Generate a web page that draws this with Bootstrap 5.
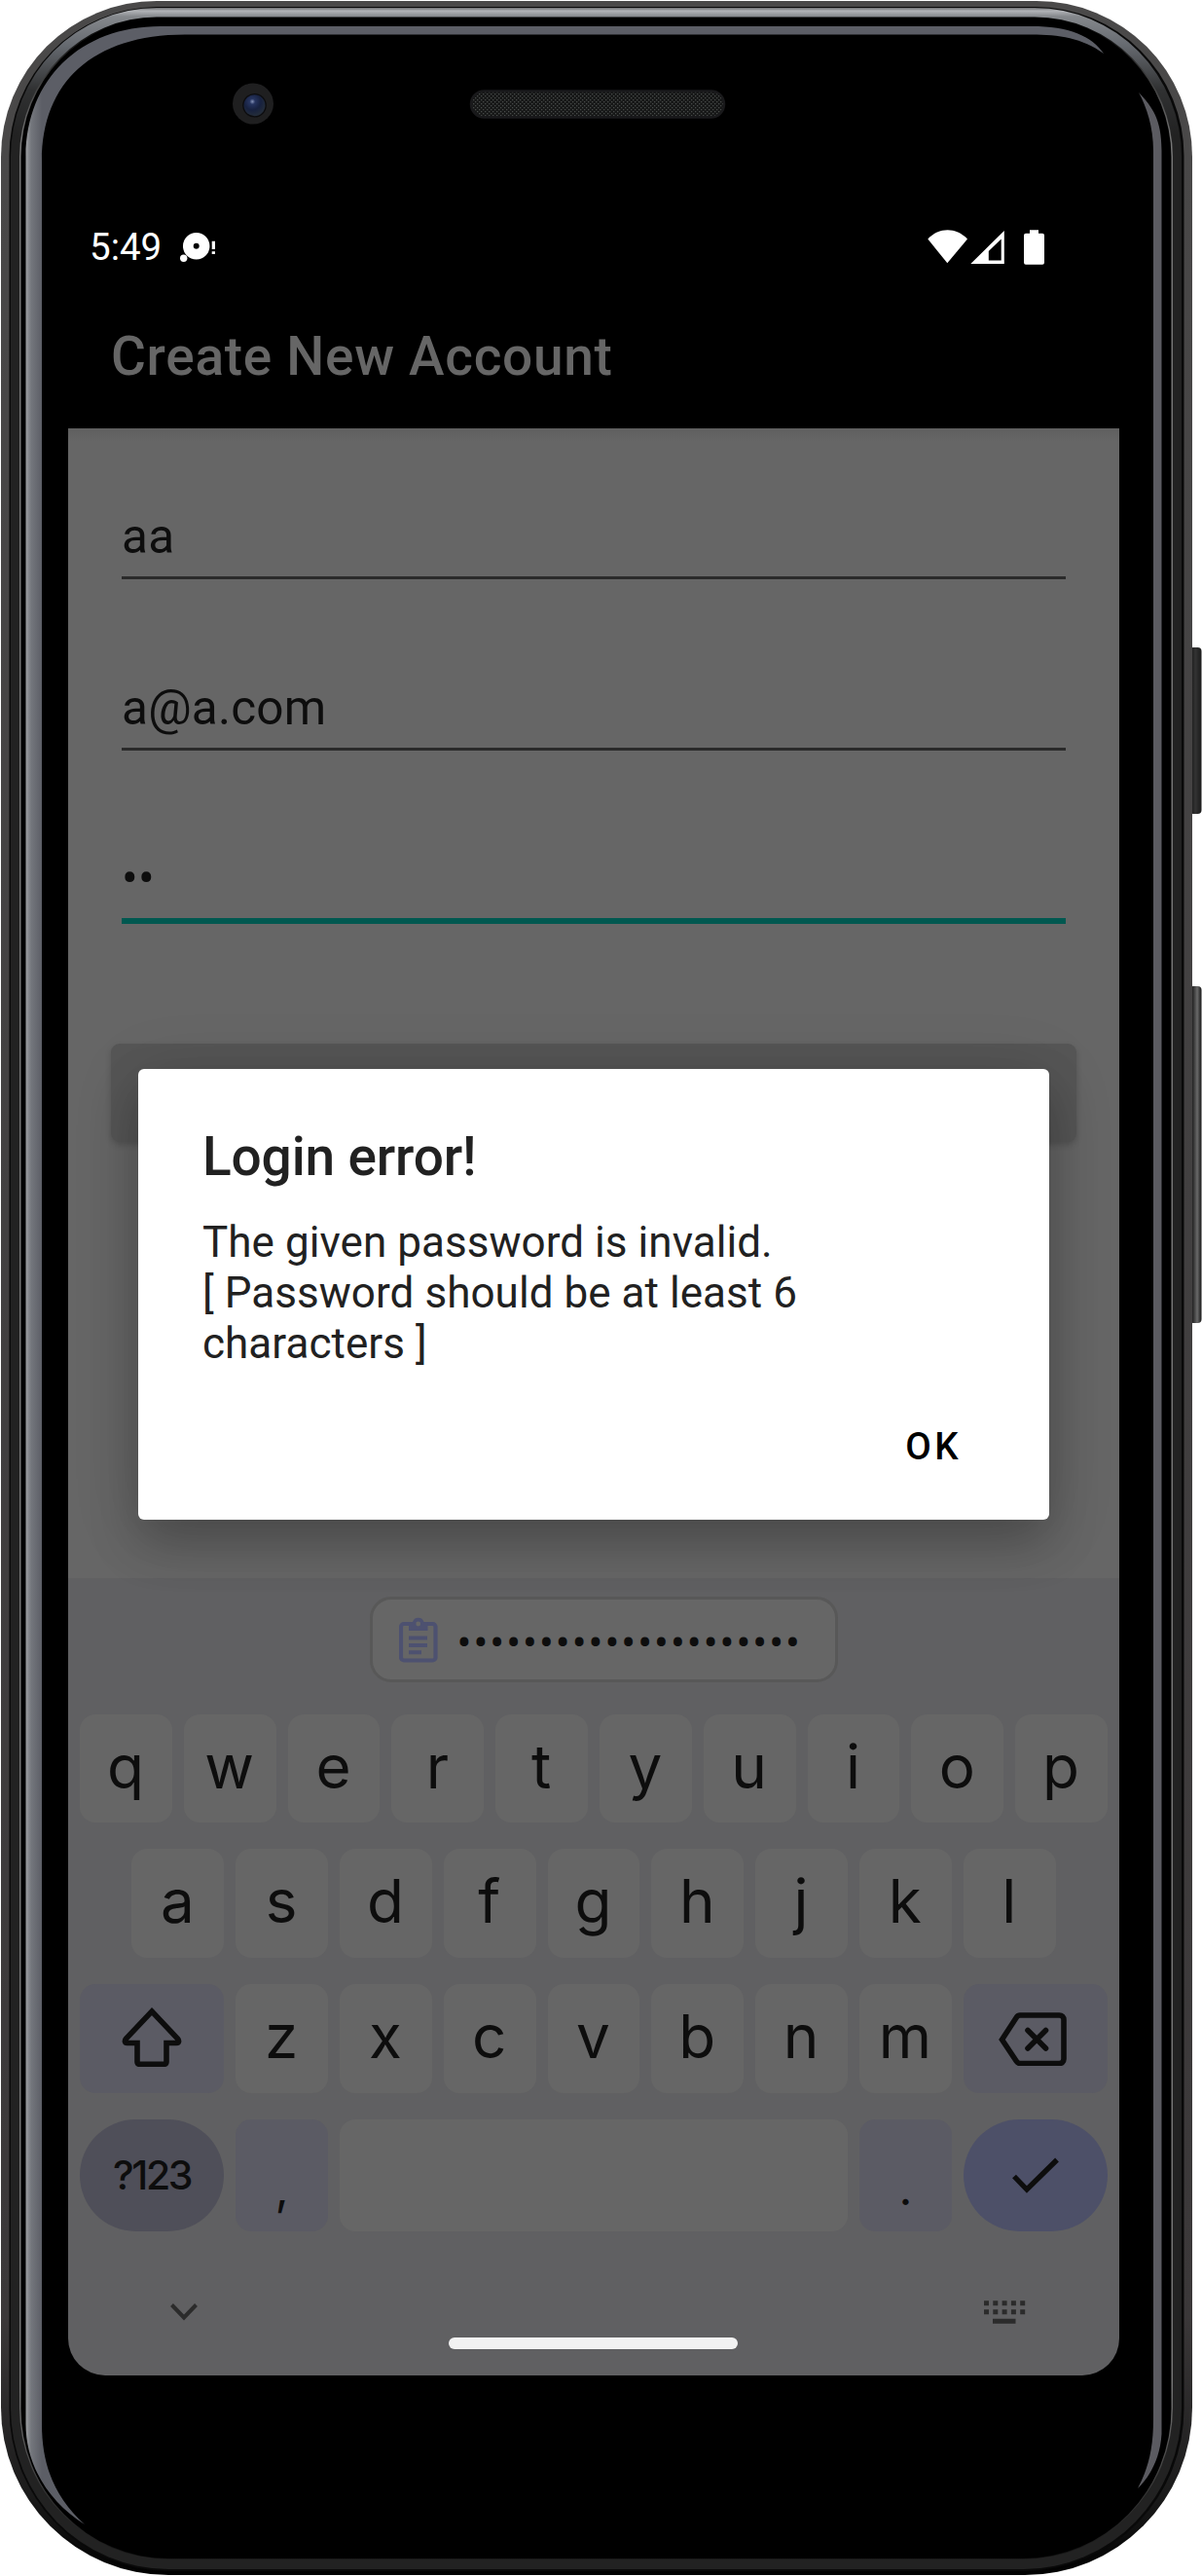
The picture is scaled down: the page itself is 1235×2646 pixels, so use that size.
<!DOCTYPE html>
<html lang="en">
<head>
<meta charset="utf-8">
<meta name="viewport" content="width=device-width, initial-scale=1">
<title>Create New Account</title>
<link href="https://cdn.jsdelivr.net/npm/bootstrap@5.3.0/dist/css/bootstrap.min.css" rel="stylesheet">
<style>
  body { font-family: Roboto, "Liberation Sans", sans-serif; background: #fff; }
  .device { width: 1235px; height: 2646px; padding: 220px 85px 0 70px; }
  .device-frame { width: 1235px; height: 2646px; }
  .screen { width: 1080px; height: 2220px; border-radius: 0 0 38px 38px; background: #000; }
  .status-bar { height: 66px; padding: 3px 76px 0 22px; font-size: 38.5px; line-height: 1; color: #fff; }
  .notif-icon { margin-left: 18px; }
  .app-bar { height: 154px; padding: 6px 44px 0; font-size: 55px; font-weight: 500; line-height: 1; letter-spacing: .7px; color: #666; }
  .form-area { height: 1181px; padding: 72px 55px 0; background: linear-gradient(#5f5f5f, #666 14px); }
  .field { height: 83px; padding: 1px 0 2px; margin-bottom: 93px; font-size: 49.5px; line-height: 1.2; letter-spacing: .2px; color: #0d0d0d;
    background: transparent; border: 0; border-bottom: 3px solid #2a2a2a; border-radius: 0; }
  .field-active { height: 85px; padding-bottom: 2px; border-bottom: 6px solid #005850; margin-bottom: 123px; }
  .submit-btn { height: 101px; margin: 0 -11px; border-radius: 9px; background: #565656; box-shadow: 0 3px 6px rgba(0,0,0,.18); }
  .keyboard { height: 819px; padding: 19px 12px 0; background: #606062; color: #0d0d0d; font-family: Inter, "Open Sans", sans-serif; }
  .clip-chip { width: 481px; height: 88px; margin: 0 0 33px 298px; padding: 0 26px 0 27px; border: 3px solid #585858; border-radius: 22px; background: #666; }
  .clip-dots { font-family: Roboto, sans-serif; font-size: 44px; line-height: 1; letter-spacing: 2.03px; padding: 7px 8px 0 0; }
  .key-row { gap: 12px; margin-bottom: 27px; height: 112px; }
  .key-row-first { height: 111px; }
  .key-row-last { height: 115px; }
  .keycap { flex: 0 0 94.8px; width: 94.8px; border-radius: 16px; background: #666; font-size: 62px; line-height: 1; padding: 0 1px 4px 0; }
  .keycap-wide { flex-basis: 148.2px; }
  .keycap-soft { background: #5b5b64; }
  .keycap-mode { background: #4f4f59; border-radius: 58px; font-size: 41px; font-weight: 500; letter-spacing: -2.4px; padding: 0; }
  .keycap-enter { background: #4d5068; border-radius: 58px; padding: 0; }
  .keycap-punct { padding: 26px 0 0; font-size: 48px; }
  .nav-row { padding: 71px 84px 0 93px; }
  .home-pill { width: 297px; height: 12px; border-radius: 6px; background: #f2f2f2; margin: 14px 0 0 379px; }
  .scrim { padding: 878px 72px 0; }
  .dialog { height: 463px; padding: 60px 66px 0; border-radius: 6px; background: #fff; color: #212121;
    box-shadow: 0 24px 50px rgba(0,0,0,.22), 0 8px 70px rgba(0,0,0,.13); }
  .dialog h1 { font-size: 55px; line-height: 60px; font-weight: 500; letter-spacing: -.15px; margin: 0 0 32px; }
  .dialog p { font-size: 44px; line-height: 52px; letter-spacing: .05px; margin: 0 0 30px; }
  .ok-btn { height: 100px; margin-right: 24px; padding: 0; border: 0; font-size: 38.5px; line-height: 1; font-weight: 500; letter-spacing: 3.4px; color: #000; background: none; }
</style>
</head>
<body>
<div class="device position-relative overflow-hidden">

  <!-- Phone body -->
  <svg class="device-frame position-absolute top-0 start-0" viewBox="0 0 1235 2646" aria-hidden="true">
    <defs>
      <linearGradient id="rim" gradientUnits="userSpaceOnUse" x1="0" y1="8" x2="0" y2="2640">
        <stop offset="0" stop-color="#6c6d70"/><stop offset=".0012" stop-color="#b2b4b8"/><stop offset=".0034" stop-color="#85888c"/>
        <stop offset=".014" stop-color="#686c72"/><stop offset=".032" stop-color="#303132"/><stop offset=".05" stop-color="#222"/>
        <stop offset="1" stop-color="#222"/>
      </linearGradient>
      <linearGradient id="line" x1="0" y1="0" x2="0" y2="1">
        <stop offset="0" stop-color="#000"/><stop offset=".02" stop-color="#333"/><stop offset=".05" stop-color="#777"/>
        <stop offset=".93" stop-color="#777"/><stop offset="1" stop-color="#111"/>
      </linearGradient>
      <linearGradient id="body" x1="0" y1="0" x2="0" y2="1">
        <stop offset="0" stop-color="#4a4949"/><stop offset=".9" stop-color="#3b3839"/><stop offset=".97" stop-color="#1a1a1a"/><stop offset="1" stop-color="#000"/>
      </linearGradient>
      <linearGradient id="glow" gradientUnits="userSpaceOnUse" x1="26" y1="0" x2="43" y2="0">
        <stop offset="0" stop-color="#a0a2a5"/><stop offset=".35" stop-color="#74777d"/><stop offset="1" stop-color="#5c5e66"/>
      </linearGradient>
      <linearGradient id="side" x1="0" y1="0" x2="1" y2="0">
        <stop offset="0" stop-color="#111"/><stop offset=".3" stop-color="#2a2a2a"/><stop offset=".65" stop-color="#6a6a6a"/><stop offset="1" stop-color="#151515"/>
      </linearGradient>
      <linearGradient id="power" x1="0" y1="0" x2="1" y2="0">
        <stop offset="0" stop-color="#111"/><stop offset=".5" stop-color="#333"/><stop offset="1" stop-color="#1a1a1a"/>
      </linearGradient>
      <radialGradient id="lens" cx=".4" cy=".32" r=".65">
        <stop offset="0" stop-color="#8592b8"/><stop offset=".2" stop-color="#26345f"/><stop offset=".6" stop-color="#17213f"/><stop offset="1" stop-color="#232c3a"/>
      </radialGradient>
      <pattern id="mesh" width="4" height="4" patternUnits="userSpaceOnUse">
        <rect width="4" height="4" fill="#161717"/><rect width="1.3" height="1.3" fill="#474a49"/><rect x="2" y="2" width="1.3" height="1.3" fill="#474a49"/>
      </pattern>
    </defs>
    <rect x="1222" y="665" width="12.5" height="171" rx="4" fill="url(#power)"/>
    <rect x="1222" y="1013" width="12.5" height="346" rx="4" fill="url(#side)"/>
    <path fill="url(#body)" d="M161 1H1065A160 160 0 0 1 1225 161V2473A172 172 0 0 1 1053 2645H173A172 172 0 0 1 1 2473V161A160 160 0 0 1 161 1Z"/>
    <path fill="#090909" d="M161 7H1063A153 153 0 0 1 1216.500 161V2473A165 167 0 0 1 1053 2641H173A164 167 0 0 1 9.500 2473V161A153 153 0 0 1 161 7Z"/>
    <path fill="url(#rim)" d="M161 8H1063A151 153 0 0 1 1214 161V2473A162 166 0 0 1 1052 2639H173A162 166 0 0 1 11 2473V161A150 153 0 0 1 161 8Z"/>
    <path fill="url(#line)" d="M161 17.500H1063A142 144 0 0 1 1205 161V2473A153 155 0 0 1 1052 2628.500H173A153 155 0 0 1 20 2473V161A141 144 0 0 1 161 17.500Z"/>
    <path d="M161 18.500H1063A140.500 143 0 0 1 1203.500 161V2473A152 154 0 0 1 1051 2628H173A152 154 0 0 1 21.500 2473V161A140 143 0 0 1 161 18.500Z"/>
    <path fill="url(#glow)" d="M87 2593C50 2570 26.500 2532 26.500 2490V160C27 82 82 27 165 27H1060C1098 27 1122 37 1134 55C1112 39 1088 35.500 1060 35.500H190C95 35.500 43 85 43 165V2490C43 2535 58 2567 87 2593Z"/>
    <path fill="#5b5b61" d="M1170 95C1184 110 1193.500 122 1193.500 155V2500C1192 2525 1182 2543 1169 2556C1180 2535 1185 2515 1185 2485V155C1185 130 1178 110 1170 95Z"/>
    <circle cx="260" cy="106.500" r="21" fill="#1f1f20"/>
    <circle cx="261.500" cy="108.300" r="12.300" fill="#0c0c0e"/>
    <circle cx="261.500" cy="108.300" r="11" fill="url(#lens)"/>
    <rect x="484" y="93.500" width="260" height="27" rx="13.500" fill="url(#mesh)" stroke="#19191b" stroke-width="2.500"/>
  </svg>

  <main class="screen position-relative overflow-hidden d-flex flex-column">
    <header class="status-bar d-flex align-items-center">
      <span>5:49</span>
      <svg class="notif-icon" width="38" height="36" viewBox="184 236 38 36" fill="#fff" aria-hidden="true">
        <path fill-rule="evenodd" d="M201.700 238.100a13.700 13.700 0 1 1 0 27.400a13.700 13.700 0 1 1 0-27.400ZM201.700 248.800a3 3 0 1 0 0 6a3 3 0 1 0 0-6Z"/>
        <circle cx="188.700" cy="264.300" r="3.700"/><path d="M217.700 246.700h3.300v8.300h-3.300zM217.700 257.300h3.300v2.800h-3.300z"/>
      </svg>
      <svg class="ms-auto" width="122" height="38" viewBox="952 235 122 38" fill="#fff" aria-hidden="true">
        <path d="M973.300 269.300L953.300 244.500C965 232.300 982 232.300 994 244.500Z"/>
        <path fill-rule="evenodd" d="M1031.800 236V270H997.300ZM1028.700 244.500L1015.800 257V266.500H1028.700Z"/>
        <path d="M1058 235.300h9v3.400h4a2 2 0 0 1 2 2v28a2 2 0 0 1-2 2h-17a2 2 0 0 1-2-2v-28a2 2 0 0 1 2-2h4z"/>
      </svg>
    </header>
    <div class="app-bar d-flex align-items-center">Create New Account</div>

    <form class="form-area d-flex flex-column flex-shrink-0">
      <div class="field d-flex align-items-center">aa</div>
      <div class="field d-flex align-items-center">a@a.com</div>
      <div class="field field-active d-flex align-items-center">••</div>
      <div class="submit-btn"></div>
    </form>

    <section class="keyboard flex-shrink-0">
      <div class="clip-chip d-flex align-items-center justify-content-between">
        <svg width="40" height="47" viewBox="0 0 40 47" fill="none" stroke="#4d5170" aria-hidden="true">
          <rect x="2" y="7" width="35.500" height="37.500" rx="3" stroke-width="4.200"/>
          <path d="M10 5h4a6 6 0 0 1 11.500 0h4v9H10z" fill="#4d5170" stroke="none"/>
          <circle cx="19.700" cy="7" r="2.400" fill="#666" stroke="none"/>
          <path d="M10 21.500h19M10 29h19M10 36.200h13" stroke-width="4"/>
        </svg>
        <span class="clip-dots">•••••••••••••••••••••</span>
      </div>
      <div class="key-row key-row-first d-flex justify-content-center">
        <div class="keycap d-flex align-items-center justify-content-center">q</div>
        <div class="keycap d-flex align-items-center justify-content-center">w</div>
        <div class="keycap d-flex align-items-center justify-content-center">e</div>
        <div class="keycap d-flex align-items-center justify-content-center">r</div>
        <div class="keycap d-flex align-items-center justify-content-center">t</div>
        <div class="keycap d-flex align-items-center justify-content-center">y</div>
        <div class="keycap d-flex align-items-center justify-content-center">u</div>
        <div class="keycap d-flex align-items-center justify-content-center">i</div>
        <div class="keycap d-flex align-items-center justify-content-center">o</div>
        <div class="keycap d-flex align-items-center justify-content-center">p</div>
      </div>
      <div class="key-row d-flex justify-content-center">
        <div class="keycap d-flex align-items-center justify-content-center">a</div>
        <div class="keycap d-flex align-items-center justify-content-center">s</div>
        <div class="keycap d-flex align-items-center justify-content-center">d</div>
        <div class="keycap d-flex align-items-center justify-content-center">f</div>
        <div class="keycap d-flex align-items-center justify-content-center">g</div>
        <div class="keycap d-flex align-items-center justify-content-center">h</div>
        <div class="keycap d-flex align-items-center justify-content-center">j</div>
        <div class="keycap d-flex align-items-center justify-content-center">k</div>
        <div class="keycap d-flex align-items-center justify-content-center">l</div>
      </div>
      <div class="key-row d-flex justify-content-center">
        <div class="keycap keycap-wide keycap-soft d-flex align-items-center justify-content-center">
          <svg width="64" height="62" viewBox="0 0 64 62" fill="none" stroke="#0d0d0d" stroke-width="5.600" aria-hidden="true">
            <path d="M32 5L58.500 33C60.500 35.500 59.500 37.500 57.500 37.500H47V57C47 58.500 46 59.300 45 59.300H19C18 59.300 17 58.500 17 57V37.500H6.500C4.500 37.500 3.500 35.500 5.500 33Z"/>
          </svg>
        </div>
        <div class="keycap d-flex align-items-center justify-content-center">z</div>
        <div class="keycap d-flex align-items-center justify-content-center">x</div>
        <div class="keycap d-flex align-items-center justify-content-center">c</div>
        <div class="keycap d-flex align-items-center justify-content-center">v</div>
        <div class="keycap d-flex align-items-center justify-content-center">b</div>
        <div class="keycap d-flex align-items-center justify-content-center">n</div>
        <div class="keycap d-flex align-items-center justify-content-center">m</div>
        <div class="keycap keycap-wide keycap-soft d-flex align-items-center justify-content-center">
          <svg class="mt-1 me-1" width="70" height="56" viewBox="0 0 70 56" fill="none" stroke="#0d0d0d" stroke-width="5.600" aria-hidden="true">
            <path d="M3.500 29L18.500 6C19.500 4.500 20.500 4 22 4H62.500A4.500 4.500 0 0 1 67 8.500V49A4.500 4.500 0 0 1 62.500 53.500H22C20.500 53.500 19.500 53 18.500 51.500Z"/>
            <path d="M30 19.500L48.500 38M48.500 19.500L30 38" stroke-linecap="round"/>
          </svg>
        </div>
      </div>
      <div class="key-row key-row-last d-flex justify-content-center mb-0">
        <div class="keycap keycap-wide keycap-mode d-flex align-items-center justify-content-center">?123</div>
        <div class="keycap keycap-soft keycap-punct d-flex align-items-center justify-content-center">,</div>
        <div class="keycap flex-fill"></div>
        <div class="keycap keycap-soft keycap-punct d-flex align-items-center justify-content-center">.</div>
        <div class="keycap keycap-wide keycap-enter d-flex align-items-center justify-content-center">
          <svg width="48" height="38" viewBox="0 0 48 38" fill="none" stroke="#0d0d0d" stroke-width="5.400" aria-hidden="true"><path d="M2 19.500L15 33L46 2.500"/></svg>
        </div>
      </div>
      <div class="nav-row d-flex justify-content-between align-items-center">
        <svg width="28" height="20" viewBox="0 0 28 20" fill="none" stroke="#2b2b2b" stroke-width="4" aria-hidden="true"><path d="M1.500 2.500L14 15.500L26.500 2.500"/></svg>
        <svg width="43" height="24" viewBox="0 0 43 24" fill="none" stroke="#2b2b2b" stroke-width="5" aria-hidden="true"><path d="M0 2.800H43M0 11.800H43" stroke-dasharray="5 4.300"/><path d="M9 21.300H32.500"/></svg>
      </div>
      <div class="home-pill"></div>
    </section>

    <div class="scrim position-absolute top-0 start-0 w-100 h-100">
      <div class="dialog d-flex flex-column" role="alertdialog">
        <h1>Login error!</h1>
        <p>The given password is invalid.<br>[ Password should be at least 6 characters ]</p>
        <button type="button" class="ok-btn align-self-end">OK</button>
      </div>
    </div>
  </main>
</div>
<script src="https://cdn.jsdelivr.net/npm/bootstrap@5.3.0/dist/js/bootstrap.bundle.min.js"></script>
</body>
</html>
